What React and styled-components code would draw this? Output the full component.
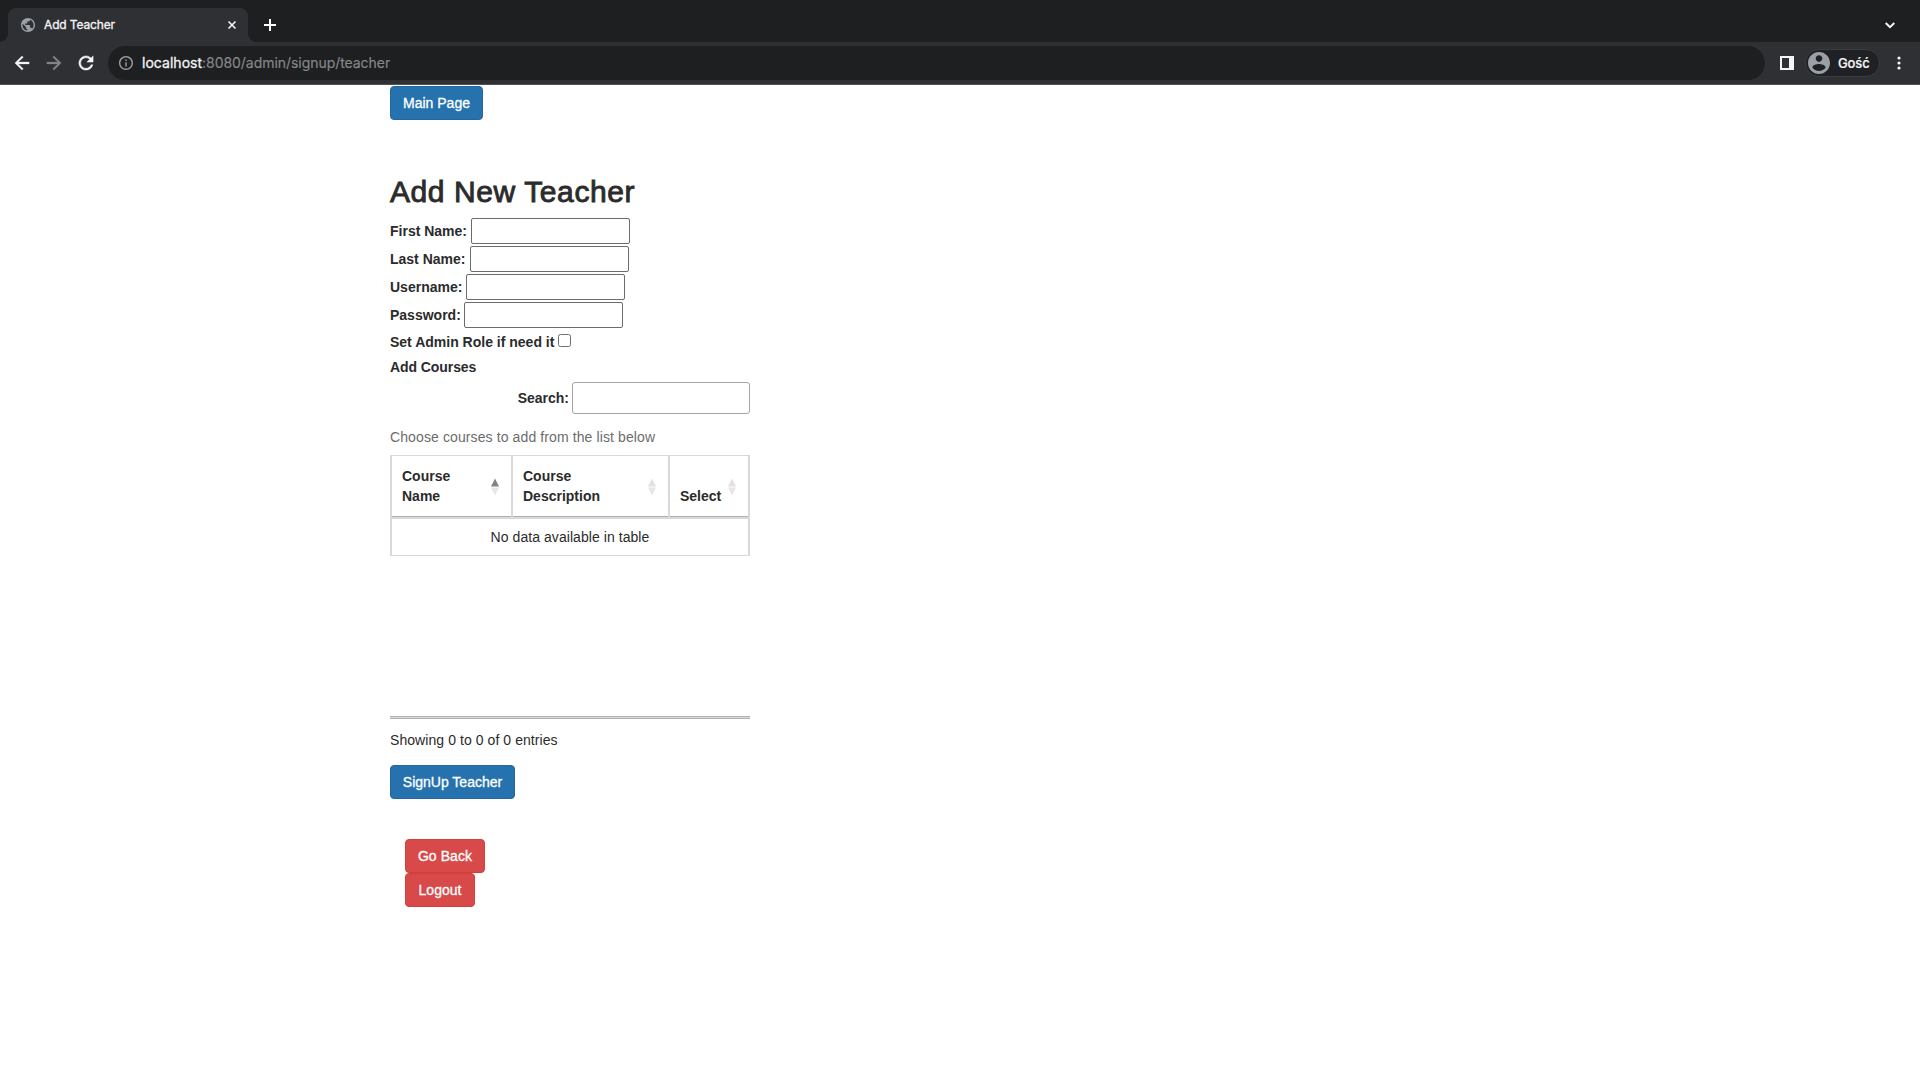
import React from "react";
import styled, { createGlobalStyle } from "styled-components";

const GlobalStyle = createGlobalStyle`
  * { box-sizing: border-box; }
  body {
    margin: 0;
    background: #fff;
    color: #2b2b2b;
    font: 14px/20px "Liberation Sans", Arial, sans-serif;
  }
`;

const Browser = styled.div`
  width: 1920px;
  height: 1080px;
  overflow: hidden;
  font-family: Inter, Roboto, sans-serif;
`;

const TabStrip = styled.div`
  display: flex;
  align-items: flex-end;
  height: 42px;
  padding-left: 8px;
  background: #1e1f21;
`;

const Tab = styled.div`
  position: relative;
  display: flex;
  align-items: center;
  width: 240px;
  height: 34px;
  padding: 0 11px 0 13px;
  border-radius: 8px 8px 0 0;
  background: #2f3034;

  &::before,
  &::after {
    content: "";
    position: absolute;
    bottom: 0;
    width: 8px;
    height: 8px;
  }
  &::before {
    left: -8px;
    background: radial-gradient(circle at 0 0, #1e1f21 7.5px, #2f3034 8px);
  }
  &::after {
    right: -8px;
    background: radial-gradient(circle at 100% 0, #1e1f21 7.5px, #2f3034 8px);
  }
`;

const TabTitle = styled.span`
  flex: 1;
  margin-left: 9px;
  color: #f4f5f6;
  font-size: 12px;
  line-height: 16px;
  letter-spacing: -0.14px;
  -webkit-text-stroke: 0.3px #f4f5f6;
`;

const NewTab = styled.div`
  display: flex;
  align-items: center;
  height: 34px;
  margin-left: 15px;
`;

const TabSearch = styled.div`
  display: flex;
  align-items: center;
  height: 34px;
  margin-left: auto;
  margin-right: 24px;
`;

const Toolbar = styled.div`
  display: flex;
  align-items: center;
  height: 43px;
  padding: 0 16px 1px 14px;
  border-bottom: 1px solid #515256;
  background: #2f3034;
`;

const NavIcons = styled.div`
  display: flex;
  gap: 16px;
  width: 94px;
`;

const Omnibox = styled.div`
  display: flex;
  align-items: center;
  width: 1657px;
  height: 34px;
  padding-left: 11px;
  border-radius: 17px;
  background: #1e1f21;
`;

const Url = styled.span`
  margin-left: 9px;
  color: #86888b;
  font-size: 14px;
  letter-spacing: -0.05px;
  white-space: pre;
  -webkit-text-stroke: 0.15px #86888b;
`;

const Host = styled.span`
  color: #f4f5f6;
  letter-spacing: 0.03px;
  -webkit-text-stroke: 0.3px #f4f5f6;
`;

const PanelIcon = styled.svg`
  margin-left: 15px;
`;

const Profile = styled.div`
  display: flex;
  align-items: center;
  width: 75px;
  height: 28px;
  margin-left: 11px;
  padding-left: 2px;
  border: 1px solid #3b3c40;
  border-radius: 14px;
  background: #202124;
`;

const ProfileName = styled.span`
  margin-left: 8px;
  color: #f4f5f6;
  font-size: 13px;
  font-weight: 500;
  letter-spacing: -0.1px;
  -webkit-text-stroke: 0.2px #f4f5f6;
`;

const MenuDots = styled.svg`
  margin-left: 16.500px;
`;

const Page = styled.main`
  display: flex;
  flex-direction: column;
  align-items: flex-start;
  padding: 1px 0 0 390px;
  font-family: "Liberation Sans", Arial, sans-serif;
`;

const Button = styled.button`
  width: ${(p) => p.$width}px;
  height: 34px;
  padding: 0;
  border: 1px solid ${(p) => (p.$danger ? "#d43f3a" : "#2565a0")};
  border-radius: 4px;
  background: ${(p) => (p.$danger ? "#d84a49" : "#2672ae")};
  color: #fff;
  font: 14px/20px "Liberation Sans", Arial, sans-serif;
  letter-spacing: ${(p) => p.$spacing || 0}px;
  -webkit-text-stroke: 0.3px #fff;
`;

const Title = styled.h2`
  margin: 55px 0 9px;
  font-size: 30px;
  font-weight: 400;
  line-height: 33px;
  letter-spacing: 0.59px;
  -webkit-text-stroke: 0.9px #2b2b2b;
`;

const Field = styled.label`
  display: flex;
  align-items: center;
  gap: ${(p) => p.$gap}px;
  height: 28px;
  font-weight: 700;
`;

const TextInput = styled.input`
  width: 159px;
  height: 26px;
  padding: 1px 2px;
  border: 1px solid #6b6b6b;
  border-radius: 2px;
  background: #fff;
  outline: none;
`;

const CheckRow = styled.label`
  display: flex;
  height: 25px;
  padding-top: 3px;
  gap: 4px;
  font-weight: 700;
`;

const Checkbox = styled.input`
  appearance: none;
  width: 13px;
  height: 13px;
  margin: 2px 0 0;
  border: 1px solid #6f6f6f;
  border-radius: 2.5px;
`;

const SectionLabel = styled.div`
  height: 28px;
  padding-top: 3px;
  font-weight: 700;
  letter-spacing: -0.08px;
`;

const SearchRow = styled.label`
  display: flex;
  align-items: center;
  justify-content: flex-end;
  gap: 3px;
  width: 360px;
  font-weight: 700;
`;

const SearchInput = styled.input`
  width: 178px;
  height: 32px;
  padding: 5px;
  border: 1px solid #a4a4a4;
  border-radius: 3px;
  outline: none;
`;

const Scroll = styled.section`
  width: 360px;
  height: 305px;
  border-bottom: 1px solid #b2b2b2;
  box-shadow: inset 0 -1px #d9d9d9, inset 0 -2px #b2b2b2;
`;

const Caption = styled.div`
  padding: 13px 0 8px;
  color: #6c6c6c;
  letter-spacing: 0.11px;
`;

const Table = styled.div`
  border: solid #d9d9d9;
  border-width: 1px 2px;
`;

const HeadRow = styled.div`
  display: grid;
  grid-template-columns: 121px 157px 1fr;
  height: 61px;
`;

const HeadCell = styled.div`
  display: flex;
  align-items: flex-end;
  justify-content: space-between;
  padding: 0 ${(p) => p.$end ?? 12}px 11px 10px;
  border-right: ${(p) => (p.$last ? 0 : 2)}px solid #d9d9d9;
  box-shadow: inset 0 -1px #b0b0b0;
  font-weight: 700;
  white-space: pre-line;
`;

const SortIcon = styled.svg`
  flex: none;
  margin-bottom: 10px;
`;

const EmptyRow = styled.div`
  height: 38px;
  padding-top: 8px;
  border-top: 2px solid #d9d9d9;
  text-align: center;
  letter-spacing: 0.06px;
`;

const Info = styled.div`
  padding: 11px 0 15px;
  letter-spacing: 0.07px;
`;

const Actions = styled.div`
  display: flex;
  flex-direction: column;
  margin: 40px 0 0 15px;
`;

const Sort = ({ ascending }) => (
  <SortIcon width="8" height="18" viewBox="0 0 8 18">
    <path d="M4 .5 8 8.500H0z" fill={ascending ? "#828282" : "#e2e2e2"} />
    <path d="M0 9.500h8l-4 8z" fill="#e6e6e6" />
  </SortIcon>
);

const fields = [
  { label: "First Name:", type: "text", gap: 4 },
  { label: "Last Name:", type: "text", gap: 5 },
  { label: "Username:", type: "text", gap: 4 },
  { label: "Password:", type: "password", gap: 3 },
];

export default function App() {
  return (
    <>
      <GlobalStyle />
      <Browser>
        <TabStrip>
          <Tab>
            <svg width="14" height="14" viewBox="2 2 20 20" fill="#9aa0a6">
              <path d="M12 2C6.480 2 2 6.480 2 12s4.480 10 10 10 10-4.480 10-10S17.520 2 12 2zm-1 17.930c-3.950-.49-7-3.850-7-7.930 0-.62.080-1.210.210-1.790L9 15v1c0 1.100.9 2 2 2v1.930zm6.900-2.540c-.26-.81-1-1.390-1.900-1.390h-1v-3c0-.55-.45-1-1-1H8v-2h2c.55 0 1-.45 1-1V7h2c1.100 0 2-.9 2-2v-.41c2.930 1.190 5 4.060 5 7.410 0 2.080-.8 3.970-2.100 5.390z" />
            </svg>
            <TabTitle>Add Teacher</TabTitle>
            <svg width="10" height="10" viewBox="0 0 10 10" stroke="#f4f5f6" strokeWidth="1.6">
              <path d="m1.500 1.500 7 7m0-7-7 7" />
            </svg>
          </Tab>
          <NewTab>
            <svg width="14" height="14" viewBox="0 0 14 14" stroke="#fff" strokeWidth="2">
              <path d="M7 1v12M1 7h12" />
            </svg>
          </NewTab>
          <TabSearch>
            <svg width="12" height="12" viewBox="0 0 12 12" fill="none" stroke="#f4f5f6" strokeWidth="2">
              <path d="m1.700 4 4.300 4.200L10.300 4" />
            </svg>
          </TabSearch>
        </TabStrip>
        <Toolbar>
          <NavIcons>
            <svg width="16" height="16" viewBox="3 3 18 18" fill="#f4f5f6">
              <path d="M20 11H7.830l5.590-5.590L12 4l-8 8 8 8 1.410-1.410L7.830 13H20v-2z" stroke="#f4f5f6" strokeWidth=".4" />
            </svg>
            <svg width="16" height="16" viewBox="3 3 18 18" fill="#838488">
              <path d="m12 4-1.410 1.410L16.170 11H4v2h12.170l-5.580 5.590L12 20l8-8z" stroke="#838488" strokeWidth=".4" />
            </svg>
            <svg width="16" height="16" viewBox="3 3 18 18" fill="#f4f5f6">
              <path d="M17.650 6.350C16.200 4.900 14.210 4 12 4c-4.420 0-7.990 3.580-7.990 8s3.570 8 7.990 8c3.730 0 6.840-2.550 7.730-6h-2.080c-.82 2.330-3.040 4-5.650 4-3.310 0-6-2.690-6-6s2.690-6 6-6c1.660 0 3.140.69 4.220 1.780L13 11h7V4l-2.350 2.350z" stroke="#f4f5f6" strokeWidth=".5" />
            </svg>
          </NavIcons>
          <Omnibox>
            <svg width="14" height="14" viewBox="2 2 20 20" fill="#9aa0a6">
              <path d="M11 7h2v2h-2zm0 4h2v6h-2zm1-9C6.480 2 2 6.480 2 12s4.480 10 10 10 10-4.480 10-10S17.520 2 12 2zm0 18c-4.410 0-8-3.590-8-8s3.590-8 8-8 8 3.590 8 8-3.590 8-8 8z" />
            </svg>
            <Url>
              <Host>localhost</Host>:8080/admin/signup/teacher
            </Url>
          </Omnibox>
          <PanelIcon width="14" height="14" viewBox="0 0 14 14">
            <path d="M0 0h14v14H0zM2 2v10h7V2z" fill="#f4f5f6" fillRule="evenodd" />
          </PanelIcon>
          <Profile>
            <svg width="22" height="22" viewBox="2 2 20 20" fill="#9aa0a6">
              <path d="M12 2C6.480 2 2 6.480 2 12s4.480 10 10 10 10-4.480 10-10S17.520 2 12 2zm0 3c1.660 0 3 1.340 3 3s-1.340 3-3 3-3-1.340-3-3 1.340-3 3-3zm0 14.200c-2.500 0-4.710-1.280-6-3.220.030-1.990 4-3.080 6-3.080 1.990 0 5.970 1.090 6 3.080-1.290 1.940-3.500 3.220-6 3.220z" />
            </svg>
            <ProfileName>Gość</ProfileName>
          </Profile>
          <MenuDots width="4" height="14" viewBox="0 0 4 14" fill="#f4f5f6">
            <circle cx="2" cy="2" r="1.600" />
            <circle cx="2" cy="7" r="1.600" />
            <circle cx="2" cy="12" r="1.600" />
          </MenuDots>
        </Toolbar>
        <Page>
          <Button $width={93}>Main Page</Button>
          <Title>Add New Teacher</Title>
          {fields.map((f) => (
            <Field key={f.label} $gap={f.gap}>
              {f.label}
              <TextInput type={f.type} />
            </Field>
          ))}
          <CheckRow>
            Set Admin Role if need it
            <Checkbox type="checkbox" />
          </CheckRow>
          <SectionLabel>Add Courses</SectionLabel>
          <SearchRow>
            Search:
            <SearchInput type="text" />
          </SearchRow>
          <Scroll>
            <Caption>Choose courses to add from the list below</Caption>
            <Table>
              <HeadRow>
                <HeadCell>
                  {"Course\nName"}
                  <Sort ascending />
                </HeadCell>
                <HeadCell>
                  {"Course\nDescription"}
                  <Sort />
                </HeadCell>
                <HeadCell $last $end={12}>
                  Select
                  <Sort />
                </HeadCell>
              </HeadRow>
              <EmptyRow>No data available in table</EmptyRow>
            </Table>
          </Scroll>
          <Info>Showing 0 to 0 of 0 entries</Info>
          <Button $width={125}>SignUp Teacher</Button>
          <Actions>
            <Button $danger $width={80} $spacing={0.08}>Go Back</Button>
            <Button $danger $width={70}>Logout</Button>
          </Actions>
        </Page>
      </Browser>
    </>
  );
}
